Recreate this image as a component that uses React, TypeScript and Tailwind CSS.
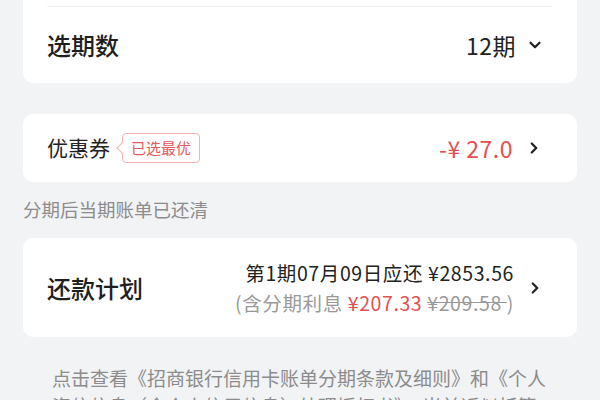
import { ChevronDown, ChevronRight } from 'lucide-react';

const font = { fontFamily: '"Noto Sans CJK SC", "Noto Sans", sans-serif' };

const App = () => {
  return (
    <div className="w-[600px] h-[400px] overflow-hidden bg-[#f2f3f5] px-[23px]" style={font}>
      {/* 期数 card (top cut off) */}
      <div className="bg-white rounded-b-[10px] px-6 pt-[6px]">
        <div className="h-px bg-[#f1f1f1]" />
        <div className="h-[76px] flex items-center justify-between">
          <span className="text-[24px] font-medium text-[#1f1f1f]">选期数</span>
          <div className="flex items-center gap-[10px] pr-[9px]">
            <span className="text-[23px] tracking-[0.5px] text-[#222]">12期</span>
            <ChevronDown className="w-[18px] h-[18px] text-[#222]" strokeWidth={3} />
          </div>
        </div>
      </div>

      {/* 优惠券 */}
      <div className="mt-[31px] h-[68px] bg-white rounded-[10px] px-6 flex items-center justify-between">
        <div className="flex items-center gap-[12px]">
          <span className="text-[21px] text-[#222]">优惠券</span>
          <div className="relative h-[30px] px-[8px] flex items-center border border-[#efb4b4] rounded-[4px] bg-white">
            <span className="absolute left-[-5px] top-[10px] w-[8px] h-[8px] rotate-45 bg-white border-l border-b border-[#efb4b4]" />
            <span className="relative text-[15px] text-[#e25a5a]">已选最优</span>
          </div>
        </div>
        <div className="flex items-center gap-[12px] pr-[10px]">
          <span className="text-[23px] tracking-[0.5px] text-[#e2514f]">-¥ 27.0</span>
          <ChevronRight className="w-[18px] h-[18px] text-[#222]" strokeWidth={3} />
        </div>
      </div>

      <div className="h-[56px] flex items-center text-[18.5px] text-[#8c8c8c]">分期后当期账单已还清</div>

      {/* 还款计划 */}
      <div className="h-[99px] bg-white rounded-[10px] px-6 flex items-center justify-between">
        <span className="text-[24px] font-medium text-[#1f1f1f]">还款计划</span>
        <div className="flex items-center gap-[12px] pr-[9px]">
          <div className="flex flex-col items-end leading-[30px] tracking-[0.6px]">
            <span className="text-[19.5px] text-[#222]">第1期07月09日应还 ¥2853.56</span>
            <span className="text-[19.5px] text-[#999]">
              (含分期利息 <span className="text-[#e2514f]">¥207.33</span> <span className="line-through">¥209.58 </span>)
            </span>
          </div>
          <ChevronRight className="w-[18px] h-[18px] text-[#222]" strokeWidth={3} />
        </div>
      </div>

      <p className="mt-[27px] px-[29px] text-[19px] leading-[28px] text-[#8c8c8c]">
        点击查看《招商银行信用卡账单分期条款及细则》和《个人资信信息（含个人信用信息）处理授权书》，当前近似折算年化利率
      </p>
    </div>
  );
};

export default App;
